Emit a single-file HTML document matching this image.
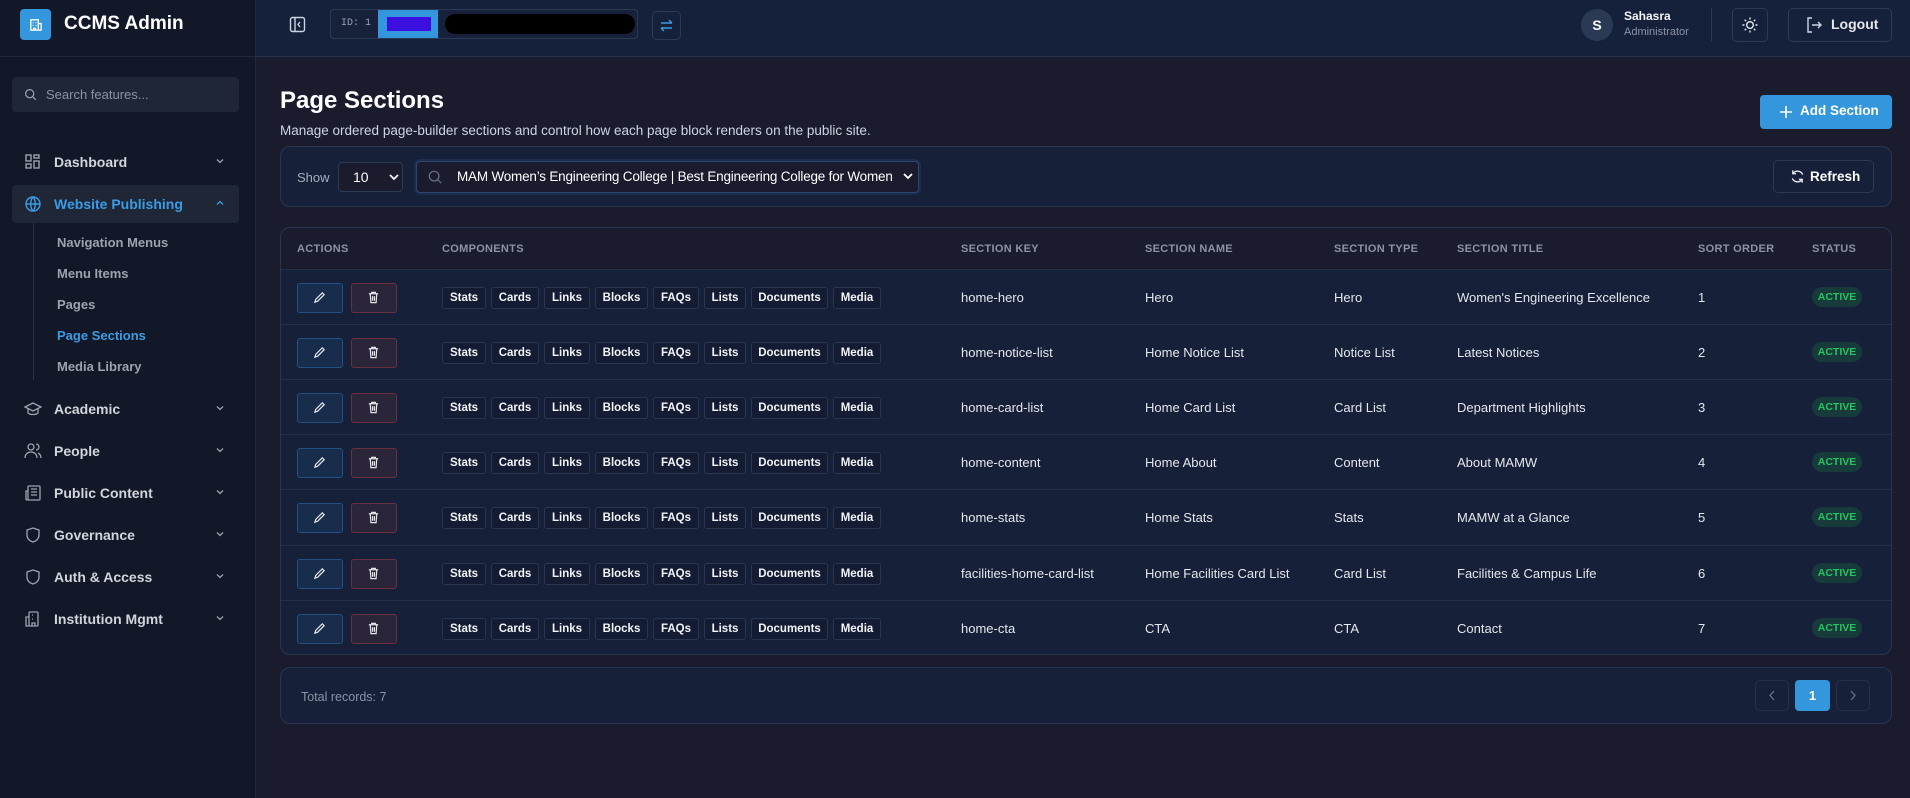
<!DOCTYPE html>
<html><head><meta charset="utf-8"><style>
*{box-sizing:border-box;margin:0;padding:0}
body{width:1910px;height:798px;background:#1b1b2e;font-family:"Liberation Sans",sans-serif;color:#e5e7eb;position:relative;overflow:hidden}
.a{position:absolute}
#side{left:0;top:0;width:256px;height:798px;background:#121827;border-right:1px solid #1f2a3d}
#hdr{left:256px;top:0;width:1654px;height:57px;background:#15203a;border-bottom:1px solid #2a3550}
.sb{left:0;top:0;width:256px;height:57px;border-bottom:1px solid #1f2a3d}
.nav{left:24px;width:210px;height:20px;font-size:14px;font-weight:bold;color:#d1d5db;display:flex;align-items:center}
.nav svg{width:18px;height:18px;margin-right:12px;flex:none}
.nav .ch{position:absolute;left:190px;top:3px;width:12px;height:12px;margin:0}
.sub{left:57px;font-size:13px;color:#9ca3af;font-weight:bold}
.card{background:#162039;border:1px solid #2a3550;border-radius:10px}
.th{font-size:11px;font-weight:bold;color:#8b93a3;letter-spacing:.3px;top:243px}
.row{left:281px;width:1610px;height:55px;border-top:1px solid #243049}
.cell{font-size:13px;color:#e5e7eb;top:20px}
.chip{display:inline-block;height:22px;line-height:20px;border:1px solid #2a3550;border-radius:3px;background:#141c33;font-size:11.5px;font-weight:bold;color:#f3f4f6;text-align:center;margin-right:5px}
.btn{border:1px solid #2d3a55;border-radius:5px}
.st{font-size:10.5px;font-weight:bold;color:#22c55e;background:#173a3a;border-radius:10px;width:50px;height:20px;line-height:20px;text-align:center;top:17px;left:1531px}
</style></head><body>
<div id="side" class="a">
 <div class="a sb"></div>
 <div class="a" style="left:20px;top:9px;width:31px;height:31px;background:#3496dc;border-radius:4px"></div>
 <svg class="a" style="left:28px;top:17px" width="15" height="15" viewBox="0 0 16 16" fill="none" stroke="#fff" stroke-width="1.4"><rect x="3" y="3" width="8" height="11"/><path d="M11 7h3v7h-3M5 6h1M8 6h1M5 9h1M8 9h1M6 14v-2h2v2"/></svg>
 <div class="a" style="left:64px;top:13px;font-size:19px;font-weight:bold;color:#fff">CCMS Admin</div>
 <div class="a" style="left:12px;top:77px;width:227px;height:35px;background:#1f2737;border-radius:4px"></div>
 <svg class="a" style="left:24px;top:88px" width="13" height="13" viewBox="0 0 16 16" fill="none" stroke="#9ca3af" stroke-width="1.5"><circle cx="7" cy="7" r="5"/><path d="M11 11l3.5 3.5"/></svg>
 <div class="a" style="left:46px;top:87px;font-size:13px;color:#8b93a3">Search features...</div>

 <div class="a nav" style="top:152px"><svg viewBox="0 0 18 18" fill="none" stroke="#9ca3af" stroke-width="1.4"><rect x="2" y="2" width="5" height="6"/><rect x="10" y="2" width="5" height="3"/><rect x="10" y="8" width="5" height="7"/><rect x="2" y="11" width="5" height="4"/></svg>Dashboard<svg class="ch" viewBox="0 0 12 12" fill="none" stroke="#9ca3af" stroke-width="1.3"><path d="M3 4.5l3 3 3-3"/></svg></div>
 <div class="a" style="left:12px;top:185px;width:227px;height:38px;background:#1f2737;border-radius:4px"></div>
 <div class="a nav" style="top:194px;color:#3b9ce4"><svg viewBox="0 0 18 18" fill="none" stroke="#3b9ce4" stroke-width="1.4"><circle cx="9" cy="9" r="7"/><path d="M2 9h14M9 2c-3 3-3 11 0 14M9 2c3 3 3 11 0 14"/></svg>Website Publishing<svg class="ch" viewBox="0 0 12 12" fill="none" stroke="#3b9ce4" stroke-width="1.3"><path d="M3 7.5l3-3 3 3"/></svg></div>
 <div class="a" style="left:33px;top:223px;width:1px;height:157px;background:#283247"></div>
 <div class="a sub" style="top:235px">Navigation Menus</div>
 <div class="a sub" style="top:266px">Menu Items</div>
 <div class="a sub" style="top:297px">Pages</div>
 <div class="a sub" style="top:328px;color:#3b9ce4">Page Sections</div>
 <div class="a sub" style="top:359px">Media Library</div>

 <div class="a nav" style="top:399px"><svg viewBox="0 0 18 18" fill="none" stroke="#9ca3af" stroke-width="1.3"><path d="M1 7l8-4 8 4-8 4z M4 9v4c2 2 8 2 10 0V9"/></svg>Academic<svg class="ch" viewBox="0 0 12 12" fill="none" stroke="#9ca3af" stroke-width="1.3"><path d="M3 4.5l3 3 3-3"/></svg></div>
 <div class="a nav" style="top:441px"><svg viewBox="0 0 18 18" fill="none" stroke="#9ca3af" stroke-width="1.3"><circle cx="7" cy="5" r="3"/><path d="M1 16c0-4 3-6 6-6s6 2 6 6M12 2a3 3 0 010 6M14 11c2 1 3 3 3 5"/></svg>People<svg class="ch" viewBox="0 0 12 12" fill="none" stroke="#9ca3af" stroke-width="1.3"><path d="M3 4.5l3 3 3-3"/></svg></div>
 <div class="a nav" style="top:483px"><svg viewBox="0 0 18 18" fill="none" stroke="#9ca3af" stroke-width="1.3"><rect x="4" y="2" width="12" height="14" rx="1"/><path d="M4 7H2v8a1 1 0 002 0M7 5h6M7 8h6M7 11h6"/></svg>Public Content<svg class="ch" viewBox="0 0 12 12" fill="none" stroke="#9ca3af" stroke-width="1.3"><path d="M3 4.5l3 3 3-3"/></svg></div>
 <div class="a nav" style="top:525px"><svg viewBox="0 0 18 18" fill="none" stroke="#9ca3af" stroke-width="1.3"><path d="M9 2l6 2v5c0 4-3 6-6 7-3-1-6-3-6-7V4z"/></svg>Governance<svg class="ch" viewBox="0 0 12 12" fill="none" stroke="#9ca3af" stroke-width="1.3"><path d="M3 4.5l3 3 3-3"/></svg></div>
 <div class="a nav" style="top:567px"><svg viewBox="0 0 18 18" fill="none" stroke="#9ca3af" stroke-width="1.3"><path d="M9 2l6 2v5c0 4-3 6-6 7-3-1-6-3-6-7V4z"/></svg>Auth &amp; Access<svg class="ch" viewBox="0 0 12 12" fill="none" stroke="#9ca3af" stroke-width="1.3"><path d="M3 4.5l3 3 3-3"/></svg></div>
 <div class="a nav" style="top:609px"><svg viewBox="0 0 18 18" fill="none" stroke="#9ca3af" stroke-width="1.3"><rect x="5" y="2" width="9" height="14" rx="1"/><path d="M5 7H2v9h3M8 5h1M11 5h0M8 9h1M8 16v-3h3v3"/></svg>Institution Mgmt<svg class="ch" viewBox="0 0 12 12" fill="none" stroke="#9ca3af" stroke-width="1.3"><path d="M3 4.5l3 3 3-3"/></svg></div>
</div>

<div id="hdr" class="a"></div>
<svg class="a" style="left:289px;top:16px" width="17" height="17" viewBox="0 0 17 17" fill="none" stroke="#cbd5e1" stroke-width="1.4"><rect x="1.5" y="1.5" width="14" height="14" rx="2"/><path d="M6 1.5v14M11 6l-2 2.5 2 2.5"/></svg>
<div class="a" style="left:330px;top:9px;width:308px;height:30px;border:1px solid #2d3a55;border-radius:4px;background:#172139"></div>
<div class="a" style="left:341px;top:18px;font-family:'Liberation Mono',monospace;font-size:10px;color:#9ca3af">ID: 1</div>
<div class="a" style="left:378px;top:10px;width:60px;height:28px;background:#3496dc"></div>
<div class="a" style="left:387px;top:17px;width:44px;height:14px;background:#3a0fe0"></div>
<div class="a" style="left:445px;top:14px;width:190px;height:20px;background:#000;border-radius:10px"></div>
<div class="a btn" style="left:652px;top:11px;width:29px;height:29px"></div>
<svg class="a" style="left:659px;top:18px" width="15" height="15" viewBox="0 0 15 15" fill="none" stroke="#3b9ce4" stroke-width="1.4"><path d="M2 5h11M10 2l3 3M13 10H2M5 13l-3-3"/></svg>

<div class="a" style="left:1581px;top:9px;width:32px;height:32px;border-radius:50%;background:#2a3a55;color:#fff;font-weight:bold;font-size:14px;text-align:center;line-height:32px">S</div>
<div class="a" style="left:1624px;top:9px;font-size:12px;font-weight:bold;color:#f3f4f6">Sahasra</div>
<div class="a" style="left:1624px;top:26px;font-size:11px;color:#8b93a3">Administrator</div>
<div class="a" style="left:1711px;top:8px;width:1px;height:33px;background:#2d3a55"></div>
<div class="a btn" style="left:1732px;top:8px;width:36px;height:34px"></div>
<svg class="a" style="left:1741px;top:16px" width="18" height="18" viewBox="0 0 18 18" fill="none" stroke="#e5e7eb" stroke-width="1.4"><circle cx="9" cy="9" r="3.3"/><path d="M9 1.5v2M9 14.5v2M1.5 9h2M14.5 9h2M3.7 3.7l1.4 1.4M12.9 12.9l1.4 1.4M3.7 14.3l1.4-1.4M12.9 5.1l1.4-1.4"/></svg>
<div class="a btn" style="left:1788px;top:8px;width:104px;height:34px"></div>
<svg class="a" style="left:1805px;top:16px" width="18" height="18" viewBox="0 0 18 18" fill="none" stroke="#cbd5e1" stroke-width="1.4"><path d="M7 2H3v14h4M7 9h9M13 6l3 3-3 3"/></svg>
<div class="a" style="left:1831px;top:16px;font-size:14px;font-weight:bold;color:#e5e7eb">Logout</div>

<div class="a" style="left:280px;top:87px;font-size:24px;font-weight:bold;color:#fff">Page Sections</div>
<div class="a" style="left:280px;top:123px;font-size:13.5px;color:#cbd5e1">Manage ordered page-builder sections and control how each page block renders on the public site.</div>
<div class="a" style="left:1760px;top:95px;width:132px;height:34px;background:#3496dc;border-radius:4px"></div>
<svg class="a" style="left:1778px;top:104px" width="16" height="16" viewBox="0 0 16 16" stroke="#fff" stroke-width="1.6"><path d="M8 2v12M2 8h12"/></svg>
<div class="a" style="left:1800px;top:103px;font-size:13.5px;font-weight:bold;color:#fff">Add Section</div>

<div class="a card" style="left:280px;top:146px;width:1612px;height:61px"></div>
<div class="a" style="left:297px;top:170px;font-size:13px;color:#a7afbd">Show</div>
<div class="a" style="left:338px;top:162px;width:65px;height:30px;border:1px solid #2d3a55;border-radius:4px;background:#1b1b2e"></div>
<div class="a" style="left:353px;top:169px;font-size:14px;color:#fff">10</div>
<svg class="a" style="left:389px;top:173px" width="10" height="8" viewBox="0 0 10 8" fill="none" stroke="#fff" stroke-width="1.8"><path d="M1 2l4 4 4-4"/></svg>
<div class="a" style="left:416px;top:161px;width:503px;height:32px;border:1px solid #2a4670;border-radius:4px;background:#1b1b2e;box-shadow:0 0 0 2px #1c2c4a"></div>
<svg class="a" style="left:428px;top:170px" width="14" height="14" viewBox="0 0 16 16" fill="none" stroke="#6b7280" stroke-width="1.4"><circle cx="7" cy="7" r="5.5"/><path d="M11 11l4 4"/></svg>
<div class="a" style="left:457px;top:169px;font-size:13.5px;color:#fff;letter-spacing:-.2px">MAM Women’s Engineering College | Best Engineering College for Women</div>
<svg class="a" style="left:903px;top:172px" width="10" height="8" viewBox="0 0 10 8" fill="none" stroke="#fff" stroke-width="1.8"><path d="M1 2l4 4 4-4"/></svg>
<div class="a btn" style="left:1773px;top:160px;width:101px;height:33px"></div>
<svg class="a" style="left:1790px;top:169px" width="15" height="15" viewBox="0 0 16 16" fill="none" stroke="#e5e7eb" stroke-width="1.5"><path d="M13.5 6A6 6 0 003 5M2.5 10a6 6 0 0010.5 1M3 1.5V5h3.5M13 14.5V11H9.5"/></svg>
<div class="a" style="left:1810px;top:169px;font-size:13.5px;font-weight:bold;color:#fff">Refresh</div>

<div class="a card" style="left:280px;top:227px;width:1612px;height:428px;overflow:hidden;background:#162039">
 <div class="a" style="left:0;top:0;width:1612px;height:42px;background:#1b1b2e"></div>
</div>
<div class="a th" style="left:297px">ACTIONS</div>
<div class="a th" style="left:442px">COMPONENTS</div>
<div class="a th" style="left:961px">SECTION KEY</div>
<div class="a th" style="left:1145px">SECTION NAME</div>
<div class="a th" style="left:1334px">SECTION TYPE</div>
<div class="a th" style="left:1457px">SECTION TITLE</div>
<div class="a th" style="left:1698px">SORT ORDER</div>
<div class="a th" style="left:1812px">STATUS</div>

<div id="rows"></div>
<script>
const data=[["home-hero","Hero","Hero","Women's Engineering Excellence"],["home-notice-list","Home Notice List","Notice List","Latest Notices"],["home-card-list","Home Card List","Card List","Department Highlights"],["home-content","Home About","Content","About MAMW"],["home-stats","Home Stats","Stats","MAMW at a Glance"],["facilities-home-card-list","Home Facilities Card List","Card List","Facilities & Campus Life"],["home-cta","CTA","CTA","Contact"]];
const chips=[["Stats",44],["Cards",48],["Links",46],["Blocks",53],["FAQs",46],["Lists",42],["Documents",77],["Media",48]];
let h="";
data.forEach((d,i)=>{
 const t=269+i*55.1;
 h+=`<div class="a row" style="top:${t}px">
 <div class="a" style="left:16px;top:13px;width:46px;height:30px;border:1px solid #24507f;border-radius:3px;background:#182c4c"></div>
 <svg class="a" style="left:32px;top:21px" width="13" height="13" viewBox="0 0 14 14" fill="none" stroke="#e5e7eb" stroke-width="1.3"><path d="M10 2l2 2-7 7-3 1 1-3z"/></svg>
 <div class="a" style="left:70px;top:13px;width:46px;height:30px;border:1px solid #6b2f3f;border-radius:3px;background:#2a2538"></div>
 <svg class="a" style="left:86px;top:21px" width="13" height="13" viewBox="0 0 14 14" fill="none" stroke="#e5e7eb" stroke-width="1.3"><path d="M2 3h10M5 3V1.5h4V3M3.5 3l.7 9.5h5.6l.7-9.5M6 5.5v5M8 5.5v5"/></svg>
 <div class="a" style="left:161px;top:17px;white-space:nowrap">${chips.map(c=>`<span class="chip" style="width:${c[1]}px">${c[0]}</span>`).join("")}</div>
 <div class="a cell" style="left:680px">${d[0]}</div>
 <div class="a cell" style="left:864px">${d[1]}</div>
 <div class="a cell" style="left:1053px">${d[2]}</div>
 <div class="a cell" style="left:1176px">${d[3].replace("&","&amp;")}</div>
 <div class="a cell" style="left:1417px">${i+1}</div>
 <div class="a st">ACTIVE</div></div>`;
});
document.getElementById("rows").innerHTML=h;
</script>

<div class="a card" style="left:280px;top:667px;width:1612px;height:57px"></div>
<div class="a" style="left:301px;top:690px;font-size:12.5px;color:#8b93a3">Total records: 7</div>
<div class="a btn" style="left:1755px;top:680px;width:34px;height:31px;border-color:#243049"></div>
<svg class="a" style="left:1768px;top:690px" width="8" height="11" viewBox="0 0 8 11" fill="none" stroke="#6b7280" stroke-width="1.3"><path d="M6 1L2 5.5 6 10"/></svg>
<div class="a" style="left:1795px;top:680px;width:35px;height:31px;background:#3496dc;border-radius:4px;color:#fff;font-size:13px;font-weight:bold;text-align:center;line-height:31px">1</div>
<div class="a btn" style="left:1836px;top:680px;width:34px;height:31px;border-color:#243049"></div>
<svg class="a" style="left:1849px;top:690px" width="8" height="11" viewBox="0 0 8 11" fill="none" stroke="#6b7280" stroke-width="1.3"><path d="M2 1l4 4.5L2 10"/></svg>
</body></html>
